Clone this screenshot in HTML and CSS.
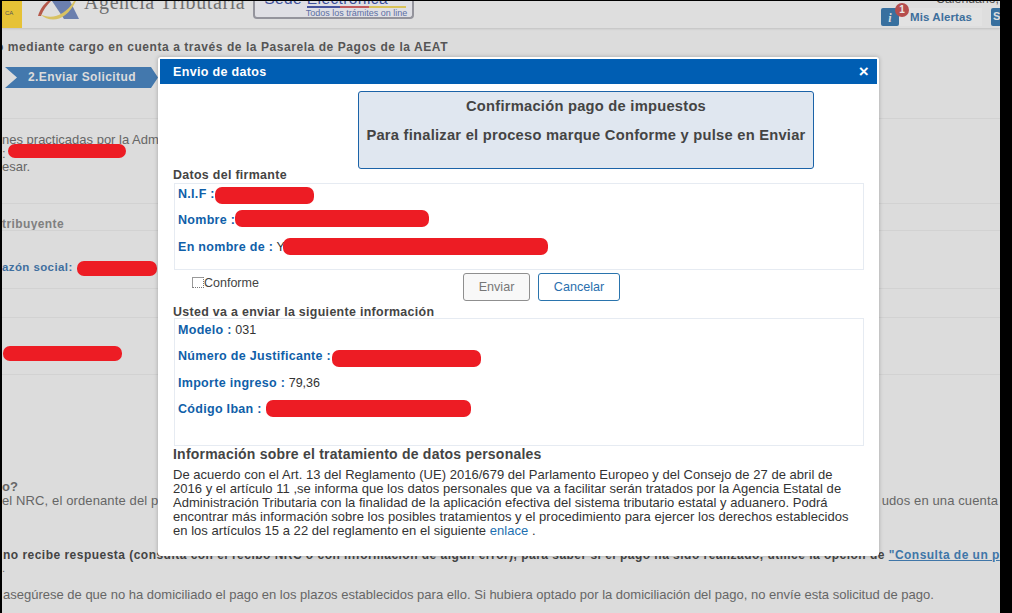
FILE: index.html
```html
<!DOCTYPE html>
<html lang="es">
<head>
<meta charset="utf-8">
<title>Envio de datos</title>
<link rel="stylesheet" href="styles.css">
</head>
<body>
<div class="screen">
  <header class="topbar">
    <div class="flag"><span>CA</span></div>
    <svg class="logo" viewBox="0 0 44 27" width="44" height="27">
      <path d="M1 15 C3 8 7 3 11 0 L14 0 C10 4 6 9 4 15 Z" fill="#b5584a"/>
      <path d="M15 0 L33 0 L42 18 L27 18 Z" fill="#6b7fae"/>
      <path d="M3 13 C14 19 28 15 37 0 L39 0 C29 20 14 23 3 13 Z" fill="#d8c263"/>
    </svg>
    <div class="brand">Agencia Tributaria</div>
    <div class="sede">
      <div class="sede-title">Sede Electrónica</div>
      <div class="sede-rule"></div>
      <div class="sede-sub">Todos los trámites on line</div>
    </div>
    <div class="topbar-right">
      <div class="calendar">Calendario,</div>
      <div class="alerts">
        <span class="icon-i">i</span>
        <span class="badge">1</span>
        <span class="alerts-label">Mis Alertas</span>
        <span class="icon-s">S</span>
      </div>
    </div>
  </header>

  <main class="back">
    <h1 class="back-title">o mediante cargo en cuenta a través de la Pasarela de Pagos de la AEAT</h1>
    <div class="step">2.Enviar Solicitud</div>
    <section class="sec sec-intro">
      <p>nes practicadas por la Adm</p>
      <p class="with-mark">:<span class="mark mark-a"></span></p>
      <p>esar.</p>
    </section>
    <section class="sec sec-contrib">tribuyente</section>
    <section class="sec sec-razon"><b>azón social:</b><span class="mark mark-b"></span></section>
    <section class="sec sec-empty"></section>
    <section class="sec sec-red"><span class="mark mark-c"></span></section>
    <section class="sec-nrc">
      <p class="strong">o?</p>
      <p class="clipline"><span>el NRC, el ordenante del p</span><span>udos en una cuenta</span></p>
    </section>
    <p class="resp"><b>no recibe respuesta (consulta con el recibo NRC o con información de algún error), para saber si el pago ha sido realizado, utilice la opción de</b> <a href="#">"Consulta de un p</a></p>
    <p class="dot">.</p>
    <p class="last">asegúrese de que no ha domiciliado el pago en los plazos establecidos para ello. Si hubiera optado por la domiciliación del pago, no envíe esta solicitud de pago.</p>
  </main>

  <div class="modal">
    <div class="modal-head"><span>Envio de datos</span><span class="close">×</span></div>
    <div class="modal-body">
      <div class="confirm">
        <div>Confirmación pago de impuestos</div>
        <div>Para finalizar el proceso marque Conforme y pulse en Enviar</div>
      </div>
      <h2 class="label-head">Datos del firmante</h2>
      <div class="panel panel-a">
        <div class="row"><b>N.I.F :</b><span class="mark m1"></span></div>
        <div class="row"><b>Nombre :</b><span class="mark m2"></span></div>
        <div class="row"><b>En nombre de :</b> <span>Y</span><span class="mark m3"></span></div>
      </div>
      <div class="actions">
        <label class="check"><span class="box"></span>Conforme</label>
        <button class="btn btn-off" type="button">Enviar</button>
        <button class="btn btn-cancel" type="button">Cancelar</button>
      </div>
      <h2 class="label-head">Usted va a enviar la siguiente información</h2>
      <div class="panel panel-b">
        <div class="row"><b>Modelo :</b> <span>031</span></div>
        <div class="row"><b>Número de Justificante :</b><span class="mark m4"></span></div>
        <div class="row"><b>Importe ingreso :</b> <span>79,36</span></div>
        <div class="row"><b>Código Iban :</b><span class="mark m5"></span></div>
      </div>
      <h3 class="info-head">Información sobre el tratamiento de datos personales</h3>
      <p class="info">De acuerdo con el Art. 13 del Reglamento (UE) 2016/679 del Parlamento Europeo y del Consejo de 27 de abril de<br>2016 y el artículo 11 ,se informa que los datos personales que va a facilitar serán tratados por la Agencia Estatal de<br>Administración Tributaria con la finalidad de la aplicación efectiva del sistema tributario estatal y aduanero. Podrá<br>encontrar más información sobre los posibles tratamientos y el procedimiento para ejercer los derechos establecidos<br>en los artículos 15 a 22 del reglamento en el siguiente <a href="#">enlace</a> .</p>
    </div>
  </div>
</div>
</body>
</html>
```
FILE: styles.css
```css
* { box-sizing: border-box; }
html, body { margin: 0; padding: 0; height: 100%; background: #000; overflow: hidden; }
body { font-family: "Liberation Sans", Arial, sans-serif; }
p, h1, h2, h3 { margin: 0; }

.screen {
  position: relative;
  width: 998px;
  height: 612px;
  margin: 1px 0 0 2px;
  background: #dcdcdc;
  overflow: hidden;
}

/* Header */
.topbar {
  height: 27px;
  display: flex;
  align-items: flex-start;
  background: #dedede;
  box-shadow: 0 1px 2px rgba(0, 0, 0, .12);
  position: relative;
}
.flag { width: 20px; height: 27px; background: #e6c236; font-size: 6px; color: #555; padding: 9px 0 0 3px; }
.logo { margin: 0 0 0 15px; flex: none; }
.brand {
  margin: -10px 0 0 3px;
  font: 20px "Liberation Serif", serif;
  letter-spacing: .6px;
  color: #6f6f6f;
  white-space: nowrap;
}
.sede {
  width: 161px;
  height: 18px;
  margin: 0 0 0 8px;
  border: 2px solid #94949c;
  border-top: 0;
  border-radius: 0 0 4px 4px;
  background: #dfdfe4;
  position: relative;
  overflow: hidden;
}
.sede-title { position: absolute; left: 9px; top: -11px; font-size: 15.5px; color: #3d4f9a; letter-spacing: .4px; white-space: nowrap; }
.sede-rule { position: absolute; left: 52px; right: 6px; top: 5px; height: 2px; background: linear-gradient(90deg, #46539c 0 33%, #c25a5c 33% 63%, #d9c35a 63%); }
.sede-sub { position: absolute; right: 5px; top: 7px; font-size: 9px; color: #5d6fa5; white-space: nowrap; }
.topbar-right { margin-left: auto; width: 119px; position: relative; }
.calendar { position: absolute; right: 1px; top: -9px; font-size: 12.3px; color: #555; white-space: nowrap; }
.alerts { display: flex; align-items: center; height: 18px; margin-top: 7px; position: relative; }
.icon-i { width: 18px; height: 18px; background: #38709f; border-radius: 2px; color: #dcdcdc; font: italic bold 12px "Liberation Serif", serif; text-align: center; line-height: 20px; flex: none; }
.badge { position: absolute; left: 14px; top: -5px; width: 14px; height: 14px; border-radius: 50%; background: #b64e4e; color: #e9e9e9; font-size: 10px; font-weight: bold; text-align: center; line-height: 14px; }
.alerts-label { padding-left: 11px; width: 83px; height: 18px; line-height: 18px; background: #e2e2e2; font-size: 11.5px; font-weight: bold; color: #3d6f9c; letter-spacing: .1px; flex: none; }
.icon-s { margin-left: 9px; width: 10px; height: 18px; background: #38709f; border-radius: 2px 0 0 2px; color: #dcdcdc; font-size: 11px; font-weight: bold; line-height: 17px; padding-left: 2px; overflow: hidden; flex: none; }

/* Background page */
.back { color: #666; font-size: 13px; white-space: nowrap; }
.back-title { margin: 12px 0 0 -6px; font-size: 12px; font-weight: bold; color: #555; letter-spacing: .56px; line-height: 14px; }
.step {
  width: 153px;
  height: 21px;
  margin: 13px 0 0 3px;
  background: #4378ad;
  color: #dcdcdc;
  font-size: 12px;
  font-weight: bold;
  letter-spacing: .4px;
  line-height: 21px;
  padding-left: 23px;
  clip-path: polygon(0 0, 146px 0, 153px 50%, 146px 100%, 0 100%, 12px 50%);
}
.sec { border-top: 1px solid #d2d2d2; position: relative; }
.sec-intro { margin-top: 30px; height: 85px; padding-top: 14px; line-height: 13.5px; }
.with-mark { position: relative; }
.sec-contrib { height: 27px; padding-top: 13px; font-size: 12px; line-height: 14px; font-weight: bold; letter-spacing: .4px; color: #808080; }
.sec-razon { height: 58px; padding-top: 29px; font-size: 11.5px; line-height: 14px; color: #3f6f9f; letter-spacing: .4px; }
.sec-empty { height: 29px; }
.sec-red { height: 58px; border-bottom: 1px solid #d2d2d2; }
.sec-nrc { position: absolute; top: 479px; left: 0; right: 0; line-height: 13.5px; letter-spacing: .12px; }
.strong { font-weight: bold; color: #666; }
.clipline { display: flex; justify-content: space-between; padding-right: 2px; }
.resp { position: absolute; top: 547px; left: 1px; right: 0; font-size: 12px; letter-spacing: .475px; color: #444; line-height: 14px; overflow: hidden; }
.resp a { color: #3f76a8; text-decoration: underline; font-weight: bold; }
.dot { position: absolute; top: 561px; left: 0; font-size: 11px; }
.last { position: absolute; top: 587px; left: 1px; right: 0; font-size: 13px; line-height: 14px; color: #666; }

.mark { position: absolute; display: block; height: 15px; background: #ed1c24; border-radius: 7px; }
.mark-a { left: 6px; top: -3px; width: 118px; height: 14px; }
.mark-b { left: 75px; top: 30px; width: 80px; }
.mark-c { left: 1px; top: 28px; width: 119px; }

/* Modal */
.modal {
  position: absolute;
  left: 156px;
  top: 56px;
  width: 721px;
  height: 499px;
  padding: 2px;
  background: #fff;
  border-radius: 3px;
  box-shadow: 0 0 4px rgba(0, 0, 0, .25);
}
.modal-head {
  height: 25px;
  display: flex;
  justify-content: space-between;
  align-items: center;
  padding: 1px 8px 0 13px;
  background: #005eb3;
  color: #fff;
  font-size: 12.5px;
  font-weight: bold;
  letter-spacing: .33px;
}
.close { font-size: 17px; line-height: 16px; font-weight: bold; }
.modal-body { padding: 7px 13px 0; color: #333; }
.confirm {
  width: 456px;
  height: 78px;
  margin-left: 185px;
  padding-top: 6px;
  background: #e0e7f0;
  border: 1px solid #1b63a8;
  border-radius: 3px;
  text-align: center;
  font-size: 14.7px;
  font-weight: bold;
  color: #444;
  letter-spacing: .25px;
  white-space: nowrap;
}
.confirm div { height: 29px; line-height: 16px; }
.label-head { font-size: 12.4px; line-height: 14px; font-weight: bold; color: #444; letter-spacing: .32px; }
.confirm + .label-head { margin-top: -1px; }
.panel { border: 1px solid #e6ebf2; padding: 0 3px; margin-left: 1px; width: 690px; }
.panel-a { height: 87px; margin-top: 1px; }
.panel-b { height: 128px; margin-top: -1px; padding-top: 1px; }
.row { height: 26.3px; line-height: 21px; font-size: 12.5px; position: relative; white-space: nowrap; color: #333; }
.row b { color: #105fa9; letter-spacing: .3px; }
.m1 { left: 37px; top: 3px; width: 99px; height: 17px; }
.m2 { left: 57px; top: 0; width: 194px; height: 17px; }
.m3 { left: 105px; top: 1px; width: 265px; height: 17px; }
.m4 { left: 154px; top: 4px; width: 149px; height: 17px; }
.m5 { left: 88px; top: 1px; width: 205px; height: 17px; }
.actions { height: 35px; position: relative; }
.check { position: absolute; left: 19px; top: 5px; display: flex; font-size: 12.5px; color: #444; line-height: 16px; }
.box { width: 12px; height: 11px; margin-top: 2px; border: 1px dotted #777; border-top: 1px solid #999; border-left: 1px solid #999; }
.btn { position: absolute; top: 3px; height: 28px; border-radius: 3px; font: 12.6px "Liberation Sans", Arial, sans-serif; padding: 0; }
.btn-off { left: 290px; width: 67px; background: #f8f8f8; border: 1px solid #8f8f8f; color: #777; }
.btn-cancel { left: 365px; width: 82px; background: #fff; border: 1px solid #2a74ad; color: #2a6fae; }
.info-head { font-size: 14px; line-height: 16px; font-weight: bold; color: #444; letter-spacing: .22px; }
.info { margin-top: 5.5px; font-size: 13px; line-height: 14px; color: #333; letter-spacing: .03px; white-space: nowrap; }
.info a { color: #1d6fb0; text-decoration: none; }
```
